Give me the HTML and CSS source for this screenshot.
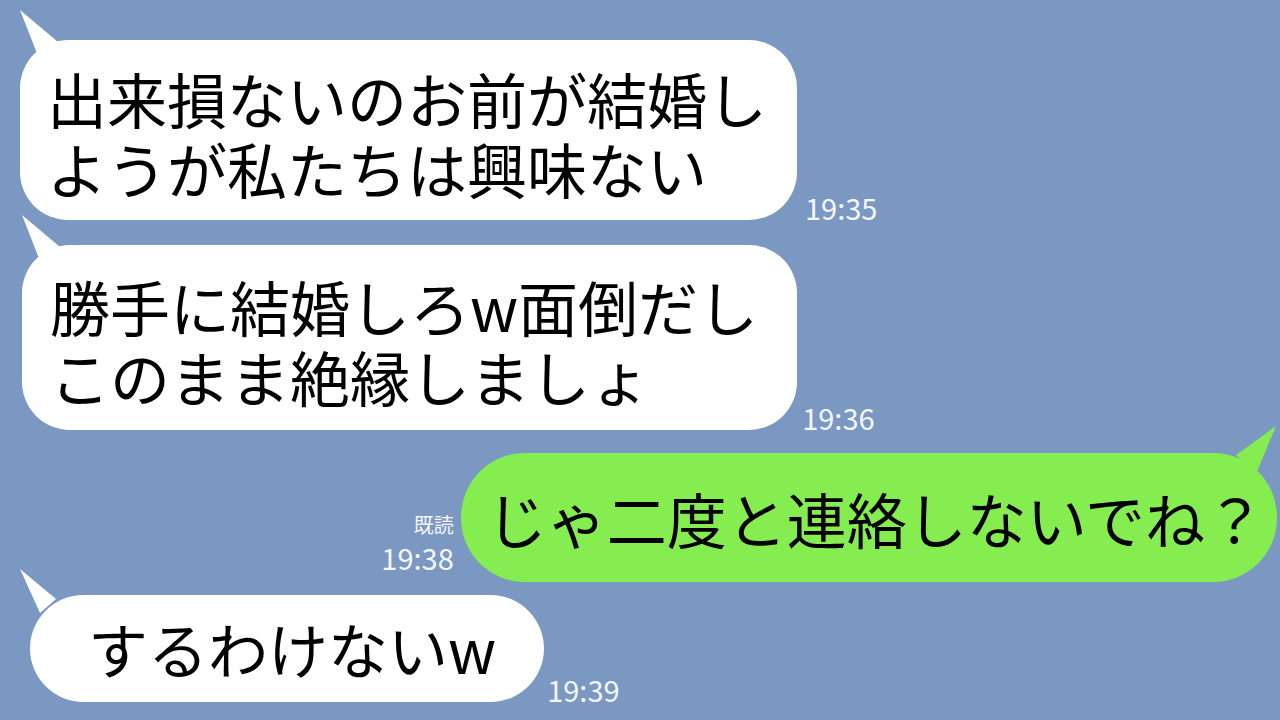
FILE: index.html
```html
<!DOCTYPE html>
<html lang="ja">
<head>
  <meta charset="UTF-8">
  <title>トーク</title>
  <link rel="stylesheet" href="styles.css">
</head>
<body>
  <div class="chat">
    <div class="row in first">
      <div class="bubble">出来損ないのお前が結婚し<br>ようが私たちは興味ない</div>
      <span class="time">19:35</span>
    </div>

    <div class="row in second">
      <div class="bubble">勝手に結婚しろw面倒だし<br>このまま絶縁しましょ</div>
      <span class="time">19:36</span>
    </div>

    <div class="row out">
      <div class="meta">
        <span class="read">既読</span>
        <span class="time">19:38</span>
      </div>
      <div class="bubble">じゃ二度と連絡しないでね？</div>
    </div>

    <div class="row in last">
      <div class="bubble short">するわけないw</div>
      <span class="time">19:39</span>
    </div>
  </div>
</body>
</html>
```

FILE: styles.css
```css
body {
  margin: 0;
  background-color: #7b98c2;
  font-family: "Noto Sans CJK JP", "Noto Sans", sans-serif;
  color: #000;
}
.chat {
  display: flex;
  flex-direction: column;
  padding: 40px 3px 0 20px;
}
.row {
  display: flex;
  align-items: flex-end;
}
.row.second {
  margin-top: 25px;
  margin-left: 2px;
}
.row.out {
  justify-content: flex-end;
  margin-top: 23px;
}
.row.last {
  margin-top: 13px;
  margin-left: 10px;
}
.bubble {
  position: relative;
  background: #fff;
  border-radius: 48px;
  font-size: 60px;
  line-height: 70px;
  white-space: nowrap;
  padding: 23px 30px 17px 27px;
}
.row.in .bubble::before {
  content: '';
  position: absolute;
  left: 0;
  top: -30px;
  width: 45px;
  height: 50px;
  background: #fff;
  clip-path: polygon(0 0, 38px 32px, 18px 46px);
}
.row.second .bubble {
  padding: 26px 39px 19px 28px;
}
.bubble.short {
  border-radius: 54px;
  padding: 18px 48px 19px 58px;
}
.row.last .bubble::before {
  left: -10px;
  top: -26px;
  clip-path: polygon(0 0, 36px 30px, 20px 44px);
}
.row.out .bubble {
  background: #86ed50;
  border-radius: 64px;
  padding: 30px 12px 29px 26px;
}
.row.out .bubble::after {
  content: '';
  position: absolute;
  right: 0;
  top: -27px;
  width: 45px;
  height: 50px;
  background: #86ed50;
  clip-path: polygon(44px 0, 4px 29px, 24px 48px);
}
.time {
  color: #f4f6fa;
  font-size: 29px;
  line-height: 29px;
  margin-left: 8px;
  margin-bottom: -2px;
}
.row.second .time {
  margin-left: 5px;
}
.row.last .time {
  margin-left: 3px;
}
.meta {
  display: flex;
  flex-direction: column;
  align-items: flex-end;
  margin-right: 7px;
  margin-bottom: 10px;
}
.meta .time {
  margin-left: 0;
  margin-bottom: 0;
}
.read {
  color: #f4f6fa;
  font-size: 20px;
  line-height: 24px;
  margin-bottom: 6px;
}
```
